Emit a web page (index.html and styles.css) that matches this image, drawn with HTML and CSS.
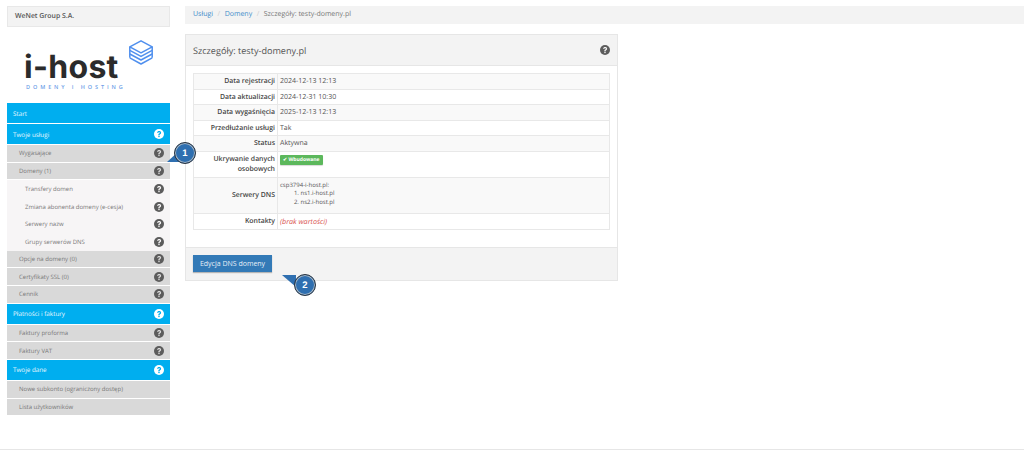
FILE: index.html
```html
<!DOCTYPE html>
<html lang="pl">
<head>
<meta charset="utf-8">
<title>Szczegóły: testy-domeny.pl</title>
<link rel="stylesheet" href="styles.css">
</head>
<body>
<svg class="defs" width="0" height="0"><defs>
<symbol id="q" viewBox="0 0 24 24"><circle cx="12" cy="12" r="12" fill="currentColor"/><path class="qm" d="M7.500 9.200C7.700 6.300 9.600 4.700 12.300 4.700c2.900 0 4.800 1.600 4.800 4 0 1.900-1 2.800-2.300 3.700-1 .7-1.300 1.100-1.300 2.100v.4H10.300v-.7c0-1.700.6-2.600 1.900-3.500 1-.7 1.500-1.100 1.500-1.900 0-.9-.6-1.400-1.500-1.400-1 0-1.700.6-1.900 1.900z"/><rect class="qm" x="10.300" y="16.200" width="3.300" height="3.300"/></symbol>
</defs></svg>
<div class="page">
<aside class="side">
  <div class="org">WeNet Group S.A.</div>
  <div class="logo">
    <div class="logo-word">i-host</div>
    <div class="logo-sub">DOMENY I HOSTING</div>
    <svg class="logo-mark" viewBox="0 0 24 25" width="24" height="25" fill="none" stroke="#4f8fee" stroke-width="1.500" stroke-linejoin="round"><path d="M12 .8 23.200 6.800 12 12.800 .8 6.800z"/><path d="M.8 10.400 12 16.400 23.200 10.400"/><path d="M.8 14 12 20 23.200 14"/><path d="M.8 17.800 12 24 23.200 17.800"/><path d="M.8 6.800V17.800M23.200 6.800V17.800"/></svg>
  </div>
  <nav class="menu">
    <a class="mi top">Start</a>
    <a class="mi top">Twoje usługi<svg class="ic"><use href="#q"/></svg></a>
    <a class="mi sub">Wygasające<svg class="ic"><use href="#q"/></svg></a>
    <a class="mi sub">Domeny (1)<svg class="ic"><use href="#q"/></svg></a>
    <a class="mi sub2">Transfery domen<svg class="ic"><use href="#q"/></svg></a>
    <a class="mi sub2">Zmiana abonenta domeny (e-cesja)<svg class="ic"><use href="#q"/></svg></a>
    <a class="mi sub2">Serwery nazw<svg class="ic"><use href="#q"/></svg></a>
    <a class="mi sub2">Grupy serwerów DNS<svg class="ic"><use href="#q"/></svg></a>
    <a class="mi sub">Opcje na domeny (0)<svg class="ic"><use href="#q"/></svg></a>
    <a class="mi sub">Certyfikaty SSL (0)<svg class="ic"><use href="#q"/></svg></a>
    <a class="mi sub">Cennik<svg class="ic"><use href="#q"/></svg></a>
    <a class="mi top">Płatności i faktury<svg class="ic"><use href="#q"/></svg></a>
    <a class="mi sub">Faktury proforma<svg class="ic"><use href="#q"/></svg></a>
    <a class="mi sub">Faktury VAT<svg class="ic"><use href="#q"/></svg></a>
    <a class="mi top">Twoje dane<svg class="ic"><use href="#q"/></svg></a>
    <a class="mi sub">Nowe subkonto (ograniczony dostęp)</a>
    <a class="mi sub">Lista użytkowników</a>
  </nav>
</aside>
<main class="main">
  <div class="crumbs"><a>Usługi</a><span class="sep">/</span><a>Domeny</a><span class="sep">/</span><span>Szczegóły: testy-domeny.pl</span></div>
  <section class="panel">
    <header class="panel-head"><h1>Szczegóły: testy-domeny.pl</h1><svg class="ic ic-head"><use href="#q"/></svg></header>
    <div class="panel-body">
      <table class="details">
        <tr class="odd"><th>Data rejestracji</th><td>2024-12-13 12:13</td></tr>
        <tr><th>Data aktualizacji</th><td>2024-12-31 10:30</td></tr>
        <tr class="odd"><th>Data wygaśnięcia</th><td>2025-12-13 12:13</td></tr>
        <tr><th>Przedłużanie usługi</th><td>Tak</td></tr>
        <tr class="odd"><th>Status</th><td>Aktywna</td></tr>
        <tr class="tall"><th>Ukrywanie danych<br>osobowych</th><td class="top-cell"><span class="badge">✔ Wbudowane</span></td></tr>
        <tr class="odd"><th>Serwery DNS</th><td class="dns"><div class="dns-host">csp3794-i-host.pl:</div><ol><li>ns1.i-host.pl</li><li>ns2.i-host.pl</li></ol></td></tr>
        <tr><th>Kontakty</th><td class="none">(brak wartości)</td></tr>
      </table>
    </div>
    <footer class="panel-foot"><button class="btn">Edycja DNS domeny</button></footer>
  </section>
</main>
</div>
<div class="callout c1"><span>1</span></div>
<div class="callout c2"><span>2</span></div>
<div class="foot-line"></div>
</body>
</html>
```
FILE: styles.css
```css
* { box-sizing: border-box; }
html, body { margin: 0; padding: 0; height: 450px; overflow: hidden; background: #fff; }
body { font-family: "Open Sans", "Noto Sans", sans-serif; font-size: 7px; color: #555; position: relative; text-rendering: geometricPrecision; }
.defs { position: absolute; }
.page { display: flex; padding: 6px 0 0 7px; gap: 15px; }
.side { width: 163px; flex: none; }
.org { height: 21px; background: #f3f3f3; border: 1px solid #e8e8e8; padding-left: 7px; line-height: 19px; font-size: 6.900px; font-weight: 600; color: #555; }
.logo { position: relative; height: 76px; }
.logo-word { position: absolute; left: 17px; top: 25px; font-family: "Inter", "Liberation Sans", sans-serif; font-weight: 700; font-size: 32px; line-height: 30px; color: #2b2b2b; letter-spacing: .3px; }
.logo-sub { position: absolute; left: 19px; top: 56px; font-size: 5.500px; font-weight: 600; line-height: 8px; letter-spacing: 2.900px; color: #6f9fe8; white-space: nowrap; }
.logo-mark { position: absolute; left: 122px; top: 13px; }
.menu { display: flex; flex-direction: column; }
.mi { display: flex; align-items: center; justify-content: space-between; white-space: nowrap; }
.top { --qm: #00aeef; height: 20px; margin-bottom: 1px; background: #00aeef; color: #e8f7fe; padding: 0 6px; font-size: 6.300px; }
.top .ic { color: #fff; }
.sub { --qm: #d9d9d9; height: 16.630px; margin-bottom: 1px; background: #d9d9d9; color: #777; padding: 0 6px 0 12px; font-size: 6px; }
.sub2 { --qm: #f7f5f6; height: 17.630px; background: #f7f5f6; color: #777; padding: 0 6px 0 18px; font-size: 6px; }
.ic { width: 10px; height: 10px; color: #5c5c5c; flex: none; }
.qm { fill: var(--qm); }
.main { flex: 1; min-width: 0; }
.crumbs { height: 18px; background: #f3f3f3; padding-left: 8px; line-height: 18px; font-size: 7px; color: #777; display: flex; }
.crumbs a { color: #428bca; }
.sep { color: #ccc; margin: 0 4.500px; }
.panel { width: 433px; margin-top: 10px; border: 1px solid #e6e6e6; }
.panel-head { --qm: #f3f3f3; height: 31px; background: #f3f3f3; border-bottom: 1px solid #e6e6e6; display: flex; align-items: center; justify-content: space-between; padding: 0 7px; }
.panel-head h1 { margin: 0; font-size: 9.100px; font-weight: 400; color: #555; }
.panel-body { padding: 7px 7px 17px; }
.details { width: 100%; border-collapse: collapse; font-size: 7px; }
.details th, .details td { border: 1px solid #e8e8e8; height: 15.600px; padding: 1.500px 2px 0; vertical-align: middle; font-weight: 400; line-height: 10px; }
.details th { width: 84px; padding-right: 2px; text-align: right; color: #444; font-size: 6.900px; font-weight: 600; }
.details td { color: #555; }
.odd th, .odd td { background: #f9f9f9; }
.tall th { height: 26px; }
.details .top-cell { vertical-align: top; padding-top: 3px; }
.badge { display: inline-block; height: 10px; line-height: 10px; background: #5cb85c; color: #fff; font-size: 5px; font-weight: 700; padding: 0 3px; border-radius: 1px; vertical-align: top; box-shadow: 0 1px 1px rgba(0,0,0,.15); }
.details .dns { height: 36px; padding-top: 3px; padding-bottom: 0; vertical-align: top; font-size: 6px; line-height: 8.600px; }
.dns-host { line-height: 8px; }
.dns ol { margin: 0; padding-left: 20.500px; }
.details .none { color: #d9534f; font-style: italic; font-size: 7.200px; }
.panel-foot { height: 33px; background: #f3f3f3; border-top: 1px solid #e6e6e6; padding: 7px; }
.btn { display: block; height: 17.500px; width: 79px; padding: 0; border: 0; background: #337ab7; color: #e6eff7; font-family: inherit; font-size: 7px; box-shadow: 0 1px 1px rgba(0,0,0,.25); }
.callout { position: absolute; width: 22px; height: 22px; }
.callout span { position: absolute; inset: 0; border-radius: 50%; background: #2f6fb0; border: 1px solid #2c3540; box-shadow: inset 0 0 0 1px #aab8c4; color: #fff; font-size: 9.500px; font-weight: 700; display: flex; align-items: center; justify-content: center; font-family: "Liberation Sans", sans-serif; }
.callout::before { content: ""; position: absolute; width: 0; height: 0; border-style: solid; }
.c1 { left: 174px; top: 142px; }
.c1::before { left: -7px; top: 9px; border-width: 0 0 11px 12px; border-color: transparent transparent #2f6fb0 transparent; }
.c2 { left: 294px; top: 274px; }
.c2::before { left: -12px; top: 1px; border-width: 12px 0 0 14px; border-color: #2f6fb0 transparent transparent transparent; }
.foot-line { position: absolute; left: 0; right: 0; top: 449px; height: 1px; background: #e6e6e6; }
```
